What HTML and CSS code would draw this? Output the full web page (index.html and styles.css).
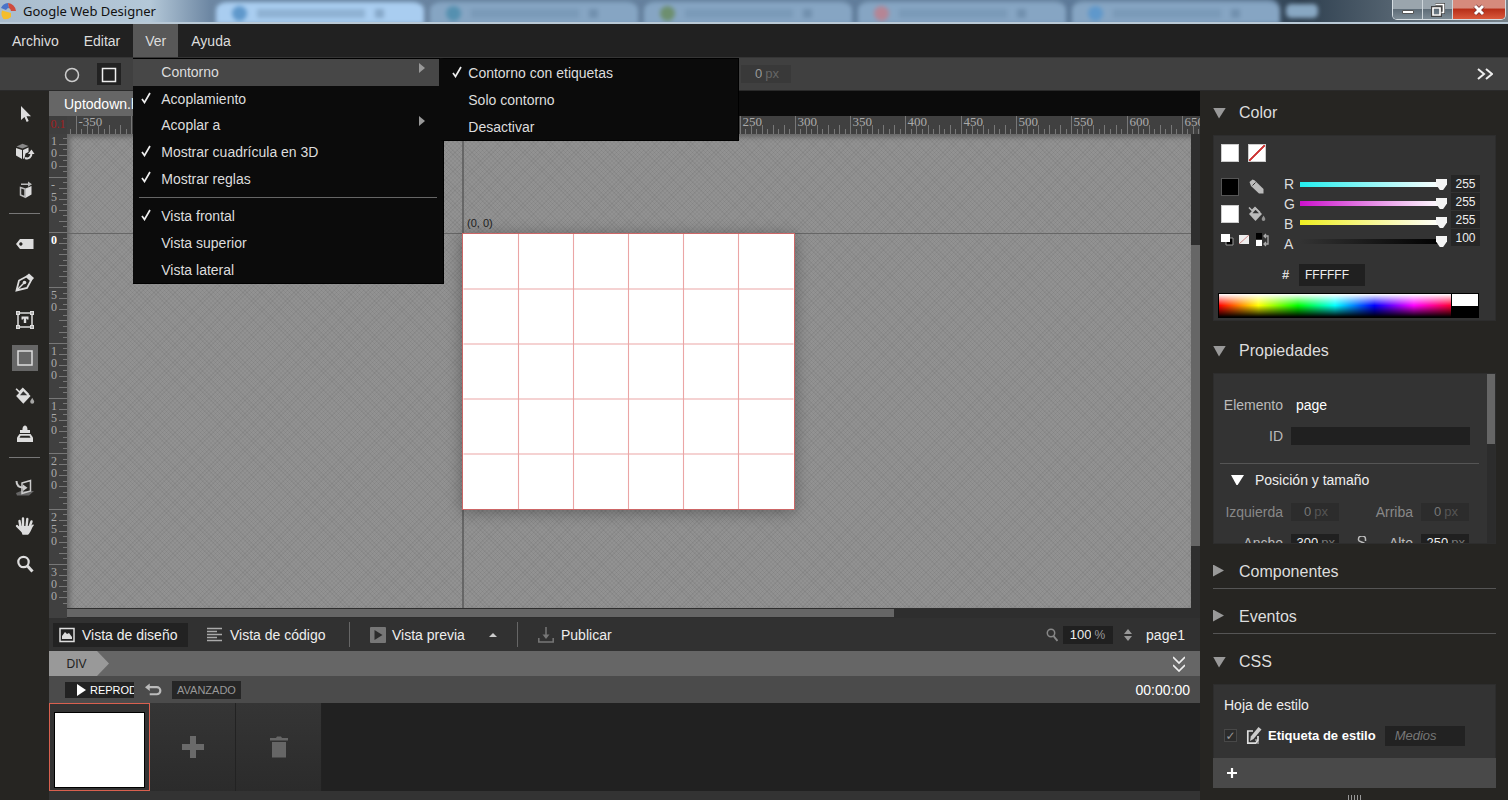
FILE: index.html
```html
<!DOCTYPE html>
<html lang="es">
<head>
<meta charset="utf-8">
<title>Google Web Designer</title>
<link rel="stylesheet" href="styles.css">
</head>
<body>
<svg class="defs" aria-hidden="true">
  <symbol id="i-bucket" viewBox="0 0 18 18"><path d="M1 9 7.500 2.500 14 9 7.500 16Z" fill="currentColor"/><path d="M1 2.500 6 7.500M4 5.500 7 2.500 12 7.500" fill="none" stroke="currentColor" stroke-width="1.500"/><path d="M4.500 8.300h6.500L7.500 4.800Z" fill="#333"/><path d="M15.500 10.500c1.200 2 1.800 2.800 1.800 3.700a1.800 1.800 0 0 1-3.600 0c0-.9.600-1.700 1.800-3.700Z" fill="currentColor" opacity=".7"/></symbol>
</svg>

<header class="titlebar">
  <svg class="logo" viewBox="0 0 18 18" aria-hidden="true"><path d="M1 6A8 8 0 0 1 8 1l1 5a4 4 0 0 0-3 2Z" fill="#4a74c9"/><path d="M8 1a9 9 0 0 1 8 8l-5 0a4 4 0 0 0-2-3Z" fill="#cf4b3e"/><path d="M2 8.500 11 11v4a9 9 0 0 1-7.500 2A9 9 0 0 1 2 8.500Z" fill="#f4bd2b"/></svg>
  <span class="app-name">Google Web Designer</span>
  <div class="glass" aria-hidden="true">
    <div class="ghost lit"><i class="blob blue"></i><i class="smear"></i><i class="dot"></i></div>
    <div class="ghost"><i class="blob teal"></i><i class="smear"></i><i class="dot"></i></div>
    <div class="ghost"><i class="blob green"></i><i class="smear"></i><i class="dot"></i></div>
    <div class="ghost"><i class="blob red"></i><i class="smear"></i><i class="dot"></i></div>
    <div class="ghost"><i class="blob blue"></i><i class="smear"></i><i class="dot"></i></div>
    <div class="new-tab"></div>
  </div>
  <div class="win-buttons">
    <button aria-label="Minimizar"><svg viewBox="0 0 16 14"><path d="M2.500 7.500h11v3h-11z" fill="#fff" stroke="#555"/></svg></button>
    <button aria-label="Restaurar"><svg viewBox="0 0 16 14"><path d="M5.500 1.500h8v8h-2M2.500 4.500h8v8h-8z" fill="none" stroke="#444" stroke-width="3"/><path d="M5.500 1.500h8v8h-2M3 5h7v7H3z" fill="none" stroke="#fff" stroke-width="1.700"/></svg></button>
    <button class="close" aria-label="Cerrar"><svg viewBox="0 0 16 14"><path d="m4 3 8 8m0-8-8 8" stroke="#733" stroke-width="4.500"/><path d="m4 3 8 8m0-8-8 8" stroke="#fff" stroke-width="3"/></svg></button>
  </div>
</header>

<nav class="menubar">
  <button>Archivo</button>
  <button>Editar</button>
  <div class="menu-host">
    <button class="open">Ver</button>
    <div class="menu" role="menu">
      <div class="group five">
        <div class="item current" role="menuitem">Contorno<span class="arrow"></span></div>
        <div class="item" role="menuitem"><svg class="tick" viewBox="0 0 10 12"><path d="m1 7 2.500 3.500L9 1"/></svg>Acoplamiento</div>
        <div class="item" role="menuitem">Acoplar a<span class="arrow"></span></div>
        <div class="item" role="menuitem"><svg class="tick" viewBox="0 0 10 12"><path d="m1 7 2.500 3.500L9 1"/></svg>Mostrar cuadrícula en 3D</div>
        <div class="item" role="menuitem"><svg class="tick" viewBox="0 0 10 12"><path d="m1 7 2.500 3.500L9 1"/></svg>Mostrar reglas</div>
      </div>
      <hr>
      <div class="group three">
        <div class="item" role="menuitem"><svg class="tick" viewBox="0 0 10 12"><path d="m1 7 2.500 3.500L9 1"/></svg>Vista frontal</div>
        <div class="item" role="menuitem">Vista superior</div>
        <div class="item" role="menuitem">Vista lateral</div>
      </div>
      <div class="menu submenu" role="menu">
        <div class="group three">
          <div class="item" role="menuitem"><svg class="tick" viewBox="0 0 10 12"><path d="m1 7 2.500 3.500L9 1"/></svg>Contorno con etiquetas</div>
          <div class="item" role="menuitem">Solo contorno</div>
          <div class="item" role="menuitem">Desactivar</div>
        </div>
      </div>
    </div>
  </div>
  <button>Ayuda</button>
</nav>

<div class="optionbar">
  <button aria-label="Óvalo"><svg viewBox="0 0 24 24"><circle cx="12" cy="12" r="6.500" fill="none" stroke="#ccc" stroke-width="1.500"/></svg></button>
  <button class="on" aria-label="Rectángulo"><svg viewBox="0 0 24 24"><path d="M5.500 5.500h13v13h-13z" fill="none" stroke="#eee" stroke-width="1.500"/></svg></button>
  <label class="unit stroke-size"><input value="0" aria-label="Tamaño" disabled><span>px</span></label>
  <button class="more" aria-label="Más"><svg viewBox="0 0 16 12"><path d="m1 1 6 5-6 5m8-10 6 5-6 5" fill="none" stroke="#eee" stroke-width="2"/></svg></button>
</div>

<div class="main">
  <aside class="tools">
    <button aria-label="Selección"><svg viewBox="0 0 20 20"><path d="M6 2v14l3.500-3 2.200 5 2-1-2.200-4.700H16Z" fill="#ddd"/></svg></button>
    <button aria-label="Rotación 3D"><svg viewBox="0 0 20 20"><path d="m1.500 4.500 6-2.700 6 2.200-6 2.500Z" fill="#888"/><path d="m1 6 6 2v9l-6-3.500Z" fill="#ddd"/><path d="m8 8 5.500-2.500v4.500l-3 1.500-1 4.500-1.500 1Z" fill="#ddd"/><path d="M10 16c4 1.500 6.500-1 6.500-5" fill="none" stroke="#ddd" stroke-width="2"/><path d="m13 12 3.500-4.500 3 4.500Z" fill="#ddd"/></svg></button>
    <button aria-label="Traslación 3D"><svg viewBox="0 0 20 20"><path d="M6 3.500h7V1.500l4 2.700-4 2.600V5H6Z" fill="#bbb"/><path d="M5.500 7.500 10 9v8l-4.500-2Z" fill="none" stroke="#bbb" stroke-width="1.500"/><path d="m10.500 8.500 6-2.500v8.500l-6 3.500Z" fill="#ddd"/></svg></button>
    <hr>
    <button aria-label="Etiqueta"><svg viewBox="0 0 20 20"><path fill-rule="evenodd" d="m1 10 4-5h13.500v10H5Zm4.800-1.700a1.700 1.700 0 1 0 .1 0Z" fill="#ddd"/></svg></button>
    <button aria-label="Pluma"><svg viewBox="0 0 20 20"><path d="M1.500 18.500 4 8.500l7.500-4L16 8.500 12 16Z" fill="none" stroke="#ddd" stroke-width="1.800"/><path d="m11 4 3-2.500 5 4.500-2.500 3Z" fill="#ddd"/><path d="m2 18 7-7" stroke="#ddd" stroke-width="1.500"/><circle cx="9.500" cy="10.500" r="1.800" fill="#ddd"/></svg></button>
    <button aria-label="Texto"><svg viewBox="0 0 20 20"><path d="M3 3h14v14H3z" fill="none" stroke="#ddd" stroke-width="1.500"/><path d="M1 1h4v4H1zM15 1h4v4h-4zM1 15h4v4H1zM15 15h4v4h-4z" fill="#ddd"/><path d="M2.500 2.500h1v1h-1zM16.500 2.500h1v1h-1zM2.500 16.500h1v1h-1zM16.500 16.500h1v1h-1z" fill="#262522"/><path d="M6.500 6.500h7v3h-1.500V8.800h-.8V13h-2.400V8.800H8v.7H6.500Z" fill="#ddd"/></svg></button>
    <button class="on" aria-label="Rectángulo"><svg viewBox="0 0 20 20"><path d="M3 3h14v14H3z" fill="none" stroke="#ddd" stroke-width="1.500"/></svg></button>
    <button aria-label="Relleno"><svg><use href="#i-bucket"/></svg></button>
    <button aria-label="Tintero"><svg viewBox="0 0 20 20"><path d="M7.500 6c0-1.500 0-4 2.500-4.500 2.500.5 2.500 3 2.500 4.500H15v3H5V6Z" fill="#ddd"/><path d="M4.500 10h11l2.500 3.500V18H2v-4.500Z" fill="#ddd"/><path d="M5.500 11.800h9l1 2h-11Z" fill="#262522"/></svg></button>
    <hr>
    <button aria-label="Escenario 3D"><svg viewBox="0 0 20 20"><path d="m1 15 5-2h13l-5 4.500H2Z" fill="#666"/><path d="m7 5 8.500-2.500V13L7 15.500Z" fill="none" stroke="#ccc" stroke-width="1.500"/><path d="M1.500 3c0 4.500 2 6.500 7 6.500" fill="none" stroke="#ccc" stroke-width="2"/><path d="m8 6.500 4.500 3.300L8 13Z" fill="#ccc"/></svg></button>
    <button aria-label="Mano"><svg viewBox="0 0 20 20"><path d="M5.500 11 4.500 5M8 11V2.500M11.500 11l.8-8M14 12.500l2.500-7M7 15l-5-5" stroke="#ddd" stroke-width="2.400" stroke-linecap="round"/><path d="M4.500 10h10.500c2.500-1.500 3.500-2 4-1-2 2-3.500 8-6 9.800H7.500Z" fill="#ddd"/></svg></button>
    <button aria-label="Zoom"><svg viewBox="0 0 20 20"><circle cx="8.500" cy="8" r="5.200" fill="none" stroke="#ddd" stroke-width="2.200"/><path d="m12.500 12 5 5.500" stroke="#ddd" stroke-width="3"/></svg></button>
  </aside>

  <main class="center">
    <div class="tabs"><button class="tab">Uptodown.html</button></div>
    <div class="stage">
      <div class="corner">0.1</div>
      <svg class="ruler-h" aria-hidden="true"></svg>
      <svg class="ruler-v" aria-hidden="true"></svg>
      <div class="canvas">
        <div class="axis-x"></div>
        <div class="axis-y"></div>
        <span class="origin">(0, 0)</span>
        <svg class="artboard" viewBox="0 0 300 250"><path d="M50 0V250M100 0V250M150 0V250M200 0V250M250 0V250M0 50H300M0 100H300M0 150H300M0 200H300"/></svg>
      </div>
      <div class="scroll-v"><div></div></div>
      <div class="scroll-h"><div></div></div>
    </div>

    <div class="viewbar">
      <button class="view design on"><svg viewBox="0 0 16 16"><path d="M1 1.500h14v13H1z" fill="none" stroke="#ddd" stroke-width="1.500"/><path d="M3 12V9l3-4 2 2 2-1 3 4v2Z" fill="#ddd"/></svg>Vista de diseño</button>
      <button class="view code"><svg viewBox="0 0 16 16"><path d="M0 1.500h15M0 4.500h10M0 7.500h15M0 10.500h10M0 13.500h15" stroke="#aaa" stroke-width="1.500"/></svg>Vista de código</button>
      <span class="rule"></span>
      <button class="view preview"><svg viewBox="0 0 16 16"><rect width="16" height="16" rx="1" fill="#777"/><path d="m4.500 3 8 5-8 5z" fill="#2b2b2b"/></svg>Vista previa<i class="up"></i></button>
      <span class="rule"></span>
      <button class="view"><svg viewBox="0 0 16 16"><path d="M.8 11v4h14.400v-4M8 0v9" fill="none" stroke="#777" stroke-width="1.500"/><path d="M4.500 7.500h7L8 12Z" fill="#777"/></svg>Publicar</button>
      <div class="zoom">
        <svg viewBox="0 0 12 14"><circle cx="5" cy="5" r="3.700" fill="none" stroke="#888" stroke-width="1.500"/><path d="m7.500 8 4 5" stroke="#888" stroke-width="2"/></svg>
        <label class="unit zoom-size"><input value="100" aria-label="Zoom"><span>%</span></label>
        <svg class="spin" viewBox="0 0 8 12"><path d="m4 0 4 5H0zM4 12 0 7h8z" fill="#999"/></svg>
        <span>page1</span>
      </div>
    </div>
    <div class="crumbs"><button>DIV</button><svg viewBox="0 0 12 16"><path d="m0 1 6 6 6-6M0 9l6 6 6-6" fill="none" stroke="#eee" stroke-width="1.700"/></svg></div>
    <div class="playbar">
      <button class="play"><i></i>REPRODUCIR</button>
      <button class="loop" aria-label="Repetir"><svg viewBox="0 0 18 14"><path d="M3 4h9.500a3.500 3.500 0 0 1 0 7.500H5" fill="none" stroke="#bbb" stroke-width="2.300"/><path d="M0 4 5 0v8Z" fill="#bbb"/></svg></button>
      <button class="advanced">AVANZADO</button>
      <time>00:00:00</time>
    </div>
    <div class="timeline">
      <div class="frame"><div></div></div>
      <button class="slot" aria-label="Añadir"><svg viewBox="0 0 22 22"><path d="M8 0h6v8h8v6h-8v8H8v-8H0V8h8z" fill="#6a6a6a"/></svg></button>
      <button class="slot" aria-label="Eliminar"><svg viewBox="0 0 22 22"><path d="M2 2h6l1-1.500h4L14 2h6v2.500H2zM4 6h14v15.500H4z" fill="#666"/></svg></button>
    </div>
    <div class="foot"></div>
  </main>

  <aside class="side">
    <h2 class="first"><i class="down"></i>Color</h2>
    <section class="panel color">
      <div class="recent"><span class="sw white"></span><span class="sw none"></span></div>
      <div class="mix">
        <div class="picks">
          <span class="sw black"></span><svg viewBox="0 0 18 18"><path d="m1.500 4 3-2.500 2 .8L15.500 11v4.500H11L3 8Z" fill="#bbb"/><path d="m4.500 7.500 3-3" stroke="#333"/></svg>
          <span class="sw white"></span><svg><use href="#i-bucket"/></svg>
        </div>
        <div class="labels"><label for="r">R</label><label for="g">G</label><label for="b">B</label><label for="a">A</label></div>
        <div class="sliders">
          <input class="s-r" id="r" type="range" max="255" value="255"><input class="s-g" id="g" type="range" max="255" value="255"><input class="s-b" id="b" type="range" max="255" value="255"><input class="s-a" id="a" type="range" max="100" value="100">
        </div>
        <div class="values"><input value="255" aria-label="R"><input value="255" aria-label="G"><input value="255" aria-label="B"><input value="100" aria-label="A"></div>
        <svg class="minis" viewBox="0 0 49 14" aria-hidden="true"><path d="M5 5h7v7H5z" fill="#000" stroke="#999"/><path d="M0 1h9v8H0z" fill="#fff"/><path d="M18 2h10v9H18z" fill="#eee"/><path d="M18 11 28 2" stroke="#c88"/><path d="M35 0h6v6h-6z" fill="#000"/><path d="M35 7h6v6h-6z" fill="#fff"/><path d="M43 3h4v8h-4M45 1l-2 2 2 2M45 9l-2 2 2 2" fill="none" stroke="#aaa" stroke-width="1.300"/></svg>
      </div>
      <div class="hex"><label for="hex">#</label><input id="hex" value="FFFFFF"></div>
      <div class="spectrum"><div class="hues"></div><div class="mono"></div></div>
    </section>

    <h2><i class="down"></i>Propiedades</h2>
    <section class="panel props">
      <div class="prop-body">
        <div class="line"><span class="name">Elemento</span><span class="el">page</span></div>
        <div class="line"><label class="name" for="eid">ID</label><input class="eid" id="eid"></div>
        <h3><i class="down"></i>Posición y tamaño</h3>
        <div class="line pair dim"><label class="name" for="px">Izquierda</label><span class="unit"><input id="px" value="0" disabled><span>px</span></span><span></span><label class="name" for="py">Arriba</label><span class="unit"><input id="py" value="0" disabled><span>px</span></span></div>
        <div class="line pair"><label class="name" for="pw">Ancho</label><span class="unit"><input id="pw" value="300"><span>px</span></span><svg viewBox="0 0 10 14"><path d="M8.500 5V3a3.500 3 0 0 0-7 0v1c0 2 7 2 7 5v1a3.500 3 0 0 1-7 0" fill="none" stroke="#bbb" stroke-width="1.500"/></svg><label class="name" for="ph">Alto</label><span class="unit"><input id="ph" value="250"><span>px</span></span></div>
      </div>
      <div class="prop-scroll"><div></div></div>
    </section>

    <h2 class="closed"><i class="right"></i>Componentes</h2>
    <h2 class="closed"><i class="right"></i>Eventos</h2>
    <h2 class="css"><i class="down"></i>CSS</h2>
    <section class="panel styles">
      <div>Hoja de estilo</div>
      <div class="style-row">
        <input type="checkbox" id="tag" checked disabled>
        <svg viewBox="0 0 16 18"><path d="M7 4H1.800v12.200h8L12 13V9" fill="none" stroke="#ddd" stroke-width="1.700"/><path d="m12.500 0 3 2.500-8 9.500-3.500 2 .8-4.500Z" fill="#ccc"/><path d="M12 17v-4H9" fill="none" stroke="#ddd"/></svg>
        <label for="tag">Etiqueta de estilo</label>
        <input class="media" placeholder="Medios" aria-label="Medios">
      </div>
    </section>
    <button class="add" aria-label="Añadir"><svg viewBox="0 0 10 10"><path d="M5 0v10M0 5h10" stroke="#fff" stroke-width="2.200"/></svg></button>
    <div class="grip"><i></i></div>
  </aside>
</div>
<script src="rulers.js"></script>
</body>
</html>
```
FILE: styles.css
```css
* { box-sizing: border-box; }
body {
  margin: 0; height: 100vh; display: flex; flex-direction: column; overflow: hidden;
  background: #262522; color: #ddd; font: 14px/20px "Liberation Sans", Arial, sans-serif;
}
button { margin: 0; padding: 0; border: 0; background: none; color: inherit; font: inherit; }
input { min-width: 0; margin: 0; padding: 0; border: 0; border-radius: 0; background: #202020; color: #eee; font: inherit; }
svg { display: block; flex: none; }
hr { margin: 0; border: 0; }
h2, h3 { margin: 0; font-weight: 400; }
.defs { width: 0; height: 0; position: absolute; }

/* window frame */
.titlebar {
  height: 24px; flex: none; display: flex; align-items: center; overflow: hidden;
  border-bottom: 2px solid #b9c9d6;
  background: linear-gradient(90deg, #a9bccd 0, #b4c8d8 150px, #6d87a3 210px, #5b7897 1180px, #2f4050 1300px, #53626f 1390px, #77828a 100%);
}
.logo { width: 18px; height: 20px; }
.app-name { width: 198px; padding-left: 5px; font: 13px/20px "Noto Sans", "Open Sans", sans-serif; color: #111; white-space: nowrap; }
.glass { flex: 1; align-self: stretch; display: flex; align-items: center; gap: 6px; filter: blur(2px); }
.ghost { width: 208px; height: 26px; display: flex; align-items: center; gap: 10px; padding: 0 16px; background: #86a5c3; border-top: 4px solid #66829e; border-radius: 12px 12px 0 0; }
.ghost.lit { background: #a9cdf0; }
.blob { width: 15px; height: 15px; border-radius: 50%; background: #5f98cb; }
.blob.teal { background: #5590b0; }
.blob.green { background: #6d8f6f; }
.blob.red { background: #b58595; }
.smear { width: 108px; height: 9px; background: #6889a8; opacity: .4; }
.dot { width: 9px; height: 9px; background: #52708e; opacity: .4; }
.new-tab { width: 32px; height: 14px; background: #88a7c2; border-radius: 5px; }
.win-buttons { align-self: flex-start; height: 20px; margin-right: 2px; display: flex; border: 1px solid #d5dde2; border-top: 0; border-radius: 0 0 5px 5px; overflow: hidden; }
.win-buttons button { width: 30px; display: grid; place-items: center; border-right: 1px solid #cdd5da; background: linear-gradient(#9aa5ad 45%, #5f6d78 50%, #7d8b95); }
.win-buttons .close { width: 52px; border: 0; background: linear-gradient(#d68a7c 40%, #b8301a 50%, #d9593c); }
.win-buttons svg { width: 16px; height: 14px; }

/* menus */
.menubar { height: 34px; flex: none; display: flex; align-items: stretch; gap: 1px; background: #212121; border-bottom: 1px solid #353535; }
.menubar button { padding: 0 12px; }
.menu-host { position: relative; display: flex; }
.menubar .open { background: #585858; }
.menu { position: absolute; z-index: 5; left: 0; top: 34px; width: 311px; height: 226px; background: #0b0b0b; border: 1px solid #000; border-left: 0; }
.menu hr { height: 1px; margin: 5px 6px; background: #666; }
.group { display: flex; flex-direction: column; }
.group.five { height: 133px; }
.group.three { height: 80px; }
.item { flex: 1; display: flex; align-items: center; position: relative; padding-left: 28px; }
.item.current { margin-right: 4px; background: #474747; }
.tick { position: absolute; left: 8px; width: 10px; height: 12px; top: 6px; fill: none; stroke: #eee; stroke-width: 1.7; }
.arrow { margin-left: auto; margin-right: 14px; margin-bottom: 9px; border: 5px solid transparent; border-left: 6px solid #999; border-right: 0; }
.item:not(.current) .arrow { margin-right: 18px; }
.menu .submenu { left: 307px; top: -1px; width: 299px; height: 83px; padding-top: 1px; border-left: 4px solid #0b0b0b; }
.submenu .item { padding-left: 24px; }

.optionbar { height: 33px; flex: none; display: flex; align-items: center; padding: 0 15px 0 60px; background: #404040; border-bottom: 1px solid #2a2a2a; }
.optionbar button { width: 24px; height: 22px; display: grid; place-items: center; }
.optionbar button + button { margin-left: 13px; }
.optionbar svg { width: 24px; height: 24px; }
.optionbar .on { background: #222; }
.optionbar .more { margin-left: auto; width: 16px; }
.optionbar .more svg { width: 16px; height: 12px; }
.unit { display: flex; align-items: center; height: 18px; padding: 0 4px; background: #202020; font-size: 13px; color: #777; }
.unit input { flex: 1; text-align: right; padding-right: 3px; background: none; font-size: 13px; width: 0; }
.unit input:disabled { color: #777; }
.optionbar .stroke-size { width: 50px; margin-left: 620px; padding-right: 12px; background: #393939; color: #666; }
.stroke-size input:disabled { color: #999; }

/* body columns */
.main { flex: 1; min-height: 0; display: flex; }
.tools { width: 49px; flex: none; display: flex; flex-direction: column; align-items: center; padding-top: 10px; }
.tools button { width: 26px; height: 26px; margin-bottom: 12px; flex: none; display: grid; place-items: center; color: #ddd; }
.tools svg { width: 20px; height: 20px; }
.tools .on { background: #666; }
.tools hr { width: 31px; height: 1px; margin: -2px 0 17px; background: #777; flex: none; }

.center { flex: 1; min-width: 0; display: flex; flex-direction: column; background: #222; }
.tabs { height: 25px; flex: none; background: #0b0b0b; }
.tab { height: 25px; padding: 0 15px; background: #666; color: #fff; }
.stage { flex: 1; min-height: 0; display: grid; grid-template: 18px 1fr 10px / 18px 1fr 9px; background: #2e2e2e; }
.corner { background: #3e3e3e; color: #a32020; font: 12px/16px "Liberation Serif", serif; text-align: center; }
.ruler-h { grid-column: 2 / 4; width: 100%; height: 18px; background: #404040; }
.ruler-v { grid-row: 2 / 4; grid-column: 1; width: 18px; height: 100%; background: #404040; }
.ruler-h line, .ruler-v line { stroke: #777; }
.ruler-h text, .ruler-v text { fill: #aaa; font: 13px "Liberation Serif", serif; }
.ruler-v text { font-size: 12px; }
.ruler-v .zero { fill: #fff; font-weight: 700; }
.canvas {
  position: relative; overflow: hidden; box-shadow: inset 3px 3px 5px #666;
  background: repeating-linear-gradient(45deg, #0000 0 2px, #0000000d 2px 3px), repeating-linear-gradient(-45deg, #0000 0 2px, #0000000d 2px 3px), #929292;
}
.axis-x, .axis-y { position: absolute; background: #666; }
.axis-x { left: 0; right: 0; top: 99px; height: 1px; }
.axis-y { top: 0; bottom: 0; left: 395px; width: 2px; }
.origin { position: absolute; left: 400px; top: 82px; font-size: 11px; line-height: 14px; color: #222; }
.artboard { position: absolute; left: 395px; top: 99px; width: 333px; height: 277px; background: #fff; border: 1px solid #c66; box-shadow: 0 2px 14px #0005; }
.artboard path { stroke: #eba5a5; fill: none; }
.scroll-v { padding-top: 111px; }
.scroll-v div { height: 301px; background: #666; }
.scroll-h { grid-column: 2 / 4; padding-top: 1px; }
.scroll-h div { width: 73%; height: 8px; background: #666; }

.viewbar { height: 33px; flex: none; display: flex; align-items: center; padding: 0 15px 0 4px; background: #313131; color: #eee; white-space: nowrap; }
.view { height: 24px; display: flex; align-items: center; gap: 7px; padding: 0 6px; }
.view.on { background: #222; }
.design, .code { width: 135px; }
.view + .view { margin-left: 13px; }
.view svg { width: 16px; height: 16px; }
.rule { width: 1px; height: 25px; margin: 0 14px 0 13px; background: #666; }
.preview { width: 140px; gap: 6px; }
.up { margin: 0 1px 0 auto; border: 4px solid transparent; border-bottom-color: #ccc; border-top: 0; }
.zoom { margin-left: auto; display: flex; align-items: center; }
.zoom > svg { width: 12px; height: 14px; margin-right: 5px; }
.zoom .spin { width: 8px; height: 12px; margin: 0 14px 0 11px; }
.zoom-size { width: 50px; padding-right: 8px; color: #999; font-size: 12px; }

.crumbs { height: 25px; flex: none; display: flex; align-items: center; justify-content: space-between; background: #666; padding-right: 15px; }
.crumbs button { width: 60px; height: 25px; padding-right: 5px; background: #999; color: #222; font-size: 12px; clip-path: polygon(0 0, 80% 0, 100% 50%, 80% 100%, 0 100%); }
.crumbs svg { width: 12px; height: 16px; }
.playbar { height: 27px; flex: none; display: flex; align-items: center; padding: 0 10px 0 16px; background: #4b4b4b; color: #fff; }
.play { width: 69px; height: 16px; display: flex; align-items: center; gap: 4px; padding-left: 12px; overflow: hidden; background: #222; font-size: 11px; }
.play i { flex: none; border: 6px solid transparent; border-left: 9px solid #fff; border-right: 0; }
.loop { margin: 0 10px 0 11px; }
.loop svg { width: 17px; height: 14px; }
.advanced { height: 18px; padding: 0 5px; background: #262626; color: #999; font-size: 11px; line-height: 18px; }
.playbar time { margin-left: auto; }
.timeline { height: 88px; flex: none; display: flex; background: #212121; }
.frame { width: 101px; padding: 8px 4px 2px; border: 1px solid #d9604f; background: #333; }
.frame div { height: 76px; background: #fff; border: 1px solid #000; }
.slot { width: 86px; display: grid; place-items: center; border-right: 1px solid #222; background: linear-gradient(#353535, #2b2b2b); }
.slot svg { width: 22px; height: 22px; }
.foot { height: 9px; flex: none; background: #333; }

/* side panels */
.side { width: 308px; flex: none; padding: 0 12px 0 13px; overflow: hidden; }
.side h2 { display: flex; align-items: center; height: 52px; padding-top: 8px; font-size: 16px; line-height: 20px; }
.side .first { height: 44px; padding: 0; }
.side .css { height: 50px; padding-top: 6px; }
.side .closed { height: 45px; padding-top: 12px; border-bottom: 1px solid #555; }
.down, .right { width: 26px; height: 11px; flex: none; background: #999; clip-path: polygon(0 0, 13px 0, 6px 11px); }
.right { height: 12px; margin-bottom: 3px; clip-path: polygon(0 0, 11px 6px, 0 12px); }
.panel { background: #333; border: 1px solid #2d2d2d; }
.color { height: 186px; padding: 8px 15px 3px 4px; }
.sw { width: 18px; height: 18px; border: 1px solid #ccc; background: #fff; }
.sw.black { background: #000; border-color: #555; }
.sw.none { background: linear-gradient(135deg, #fff 46%, #c33 47% 53%, #fff 54%); }
.recent { display: flex; gap: 9px; padding-left: 3px; }
.mix { display: grid; grid-template-columns: 49px 30px 147px 34px; padding: 12px 0 0 3px; }
.picks { grid-row: 1; display: grid; grid-template-columns: 18px 18px; align-content: start; align-items: center; gap: 9px; padding-top: 4px; color: #bbb; }
.picks svg { width: 18px; height: 18px; }
.labels { display: grid; grid-auto-rows: 20px; padding-left: 14px; }
.sliders { display: grid; grid-auto-rows: 19px; align-items: center; padding-top: 1px; }
.values { display: grid; grid-auto-rows: 17px; gap: 1px; margin-left: 4px; width: 29px; padding-top: 1px; }
.values input { width: 29px; font-size: 12px; text-align: center; background: #262626; }
.sliders input { appearance: none; width: 147px; height: 13px; background: linear-gradient(90deg, var(--from), var(--to)) 0 50% / 141px 5px no-repeat; }
.s-r { --from: #2ee; --to: #fff; }
.s-g { --from: #c1c; --to: #fff; }
.s-b { --from: #ee2; --to: #fff; }
.s-a { --from: #333; --to: #000; }
.sliders input::-webkit-slider-thumb { appearance: none; width: 11px; height: 11px; background: #f4f4f4; clip-path: polygon(0 0, 100% 0, 100% 50%, 65% 100%, 35% 100%, 0 50%); }
.minis { grid-column: 1; width: 49px; height: 14px; margin-top: -21px; }
.hex { display: flex; align-items: center; gap: 9px; padding-left: 64px; margin-top: 10px; font-size: 13px; }
.hex input { width: 66px; height: 22px; padding-left: 6px; font-size: 12px; }
.hex label { width: 8px; font-weight: 700; }
.spectrum { display: flex; height: 25px; margin-top: 7px; width: 261px; border: 1px solid #000; }
.hues { flex: 1; background: linear-gradient(#fff, #fff0 50%, #0000 50%, #000), linear-gradient(90deg, red, #ff0 17%, #0f0 34%, #0ff 50%, #00f 67%, #f0f 84%, #f03); }
.mono { width: 27px; border-left: 1px solid #000; background: linear-gradient(#fff 50%, #000 50%); }

.props { height: 171px; display: flex; overflow: hidden; }
.prop-body { flex: 1; padding: 15px 8px 0 6px; }
.line { height: 31px; display: flex; align-items: center; gap: 8px; }
.name { width: 63px; text-align: right; color: #bbb; }
.el { padding-left: 5px; color: #fff; }
.eid { width: 179px; height: 18px; }
.side h3 { display: flex; align-items: center; height: 33px; margin-top: 12px; padding-left: 11px; border-top: 1px solid #555; font-size: 14px; color: #eee; }
.prop-body .down { width: 24px; height: 10px; background: #fff; }
.pair { display: grid; grid-template-columns: 63px 48px 20px 38px 48px; }
.pair .name { width: auto; }
.pair svg { width: 10px; height: 14px; justify-self: end; }
.dim .name { color: #888; }
.dim .unit { padding-right: 11px; background: #2c2c2c; color: #555; }
.prop-scroll { width: 8px; background: #2c2c2c; }
.prop-scroll div { height: 70px; background: #666; }

.styles { height: 74px; padding: 10px; color: #eee; border-bottom: 0; }
.style-row { display: flex; align-items: center; gap: 9px; height: 21px; margin-top: 10px; }
.style-row label { font-weight: 700; font-size: 13px; margin-left: -3px; white-space: nowrap; color: #fff; }
.style-row svg { width: 16px; height: 18px; }
.style-row [type=checkbox] { appearance: none; width: 13px; height: 13px; background: #2b2b2b; border: 1px solid #484848; display: grid; place-items: center; }
.style-row [type=checkbox]::before { content: "✓"; color: #999; font: 12px/12px "DejaVu Sans", sans-serif; }
.media { width: 80px; height: 20px; padding-left: 10px; background: #222; font-size: 13px; font-style: italic; }
.media::placeholder { color: #777; }
.add { width: 100%; height: 30px; padding-left: 14px; background: #494949; }
.add svg { width: 10px; height: 10px; }
.grip { height: 10px; display: grid; place-items: center; border-bottom: 2px solid #3a3a3a; }
.grip i { width: 13px; height: 5px; background: repeating-linear-gradient(90deg, #999 0 1px, #0000 1px 3px); }
```
FILE: rulers.js
```js
const NS = "http://www.w3.org/2000/svg";
const STEP = 5.53; // pixels between ticks; each tick is 5 document units

function add(parent, name, attrs, text) {
  const el = document.createElementNS(NS, name);
  for (const key in attrs) el.setAttribute(key, attrs[key]);
  if (text) el.textContent = text;
  parent.appendChild(el);
}

const across = document.querySelector(".ruler-h");
const width = across.getBoundingClientRect().width;
for (let i = -71; 396 + i * STEP < width; i++) {
  const x = Math.round(396 + i * STEP) + 0.5;
  const major = i % 10 === 0;
  add(across, "line", { x1: x, x2: x, y1: major ? 0 : i % 2 ? 13 : 9, y2: 18 });
  if (major) add(across, "text", { x: x + 2, y: 10 }, String(i * 5));
}

const down = document.querySelector(".ruler-v");
const height = down.getBoundingClientRect().height;
for (let i = -20; 98 + i * STEP < height - 10; i++) {
  const y = Math.round(98 + i * STEP) + 0.5;
  const major = i % 10 === 0;
  add(down, "line", { y1: y, y2: y, x1: major ? 0 : i % 2 ? 14 : 10, x2: 18 });
  if (major) {
    [...String(i * 5)].forEach((ch, n) => {
      const base = y + 11 + n * 12;
      if (base > 5) add(down, "text", { x: 2, y: base, class: i === 0 ? "zero" : "digit" }, ch);
    });
  }
}
```
